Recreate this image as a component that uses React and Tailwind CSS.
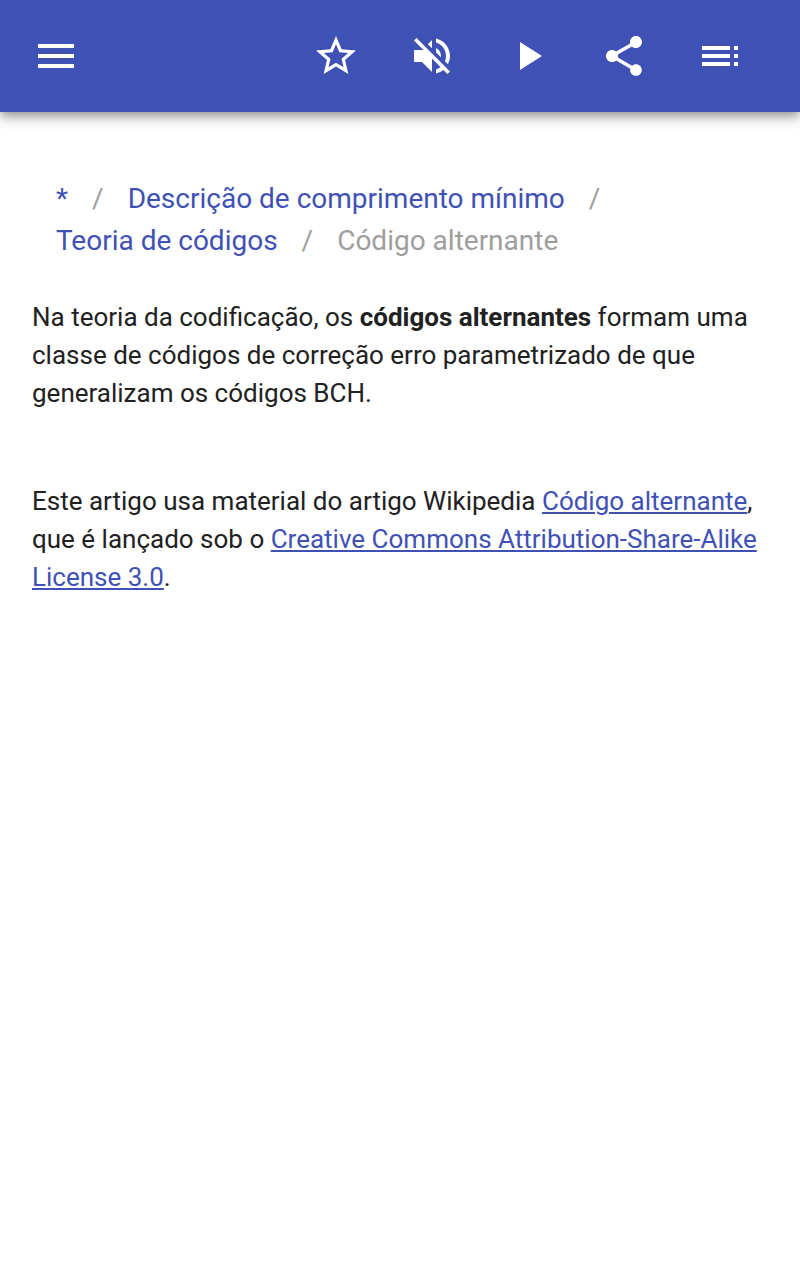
import { MdMenu, MdStarBorder, MdVolumeOff, MdPlayArrow, MdShare, MdToc } from "react-icons/md";

const crumbs = [
  { label: "*", href: "#" },
  { label: "Descrição de comprimento mínimo", href: "#" },
  { label: "Teoria de códigos", href: "#" },
  { label: "Código alternante" },
];

function IconButton({ label, children }) {
  return (
    <button type="button" aria-label={label} className="flex size-24 items-center justify-center">
      {children}
    </button>
  );
}

function AppBar() {
  return (
    <header className="flex h-28 items-center justify-between bg-[#3f51b5] px-2 text-white shadow-[0_4px_8px_-2px_rgba(0,0,0,0.28),0_8px_10px_0_rgba(0,0,0,0.14),0_2px_20px_0_rgba(0,0,0,0.12)]">
      <IconButton label="Menu">
        <MdMenu size={48} />
      </IconButton>
      <div className="flex pr-6">
        <IconButton label="Favorito">
          <MdStarBorder size={48} />
        </IconButton>
        <IconButton label="Som">
          <MdVolumeOff size={48} />
        </IconButton>
        <IconButton label="Reproduzir">
          <MdPlayArrow size={48} />
        </IconButton>
        <IconButton label="Compartilhar">
          <MdShare size={48} />
        </IconButton>
        <IconButton label="Conteúdo">
          <MdToc size={48} />
        </IconButton>
      </div>
    </header>
  );
}

function Breadcrumbs() {
  return (
    <ol className="flex flex-wrap px-6 text-[28px] leading-[42px] text-[#9e9e9e]">
      {crumbs.map(({ label, href }, i) => (
        <li key={label} className="flex">
          {href ? <a href={href} className="text-[#3f51b5]">{label}</a> : <span>{label}</span>}
          {i < crumbs.length - 1 && <span className="px-6">/</span>}
        </li>
      ))}
    </ol>
  );
}

function TextLink({ children }) {
  return (
    <a href="#" className="text-[#3f51b5] underline decoration-2 underline-offset-2">
      {children}
    </a>
  );
}

export default function App() {
  return (
    <div className="min-h-screen bg-white font-[Roboto,sans-serif] text-[#212121]">
      <AppBar />
      <main className="px-8 pt-[66px] text-[26px] leading-[38px]">
        <Breadcrumbs />
        <p className="mt-9">
          Na teoria da codificação, os <b>códigos alternantes</b> formam uma classe de códigos de correção erro
          parametrizado de que generalizam os códigos BCH.
        </p>
        <p className="mt-[70px]">
          Este artigo usa material do artigo Wikipedia <TextLink>Código alternante</TextLink>, que é lançado sob o{" "}
          <TextLink>Creative Commons Attribution-Share-Alike License 3.0</TextLink>.
        </p>
      </main>
    </div>
  );
}
